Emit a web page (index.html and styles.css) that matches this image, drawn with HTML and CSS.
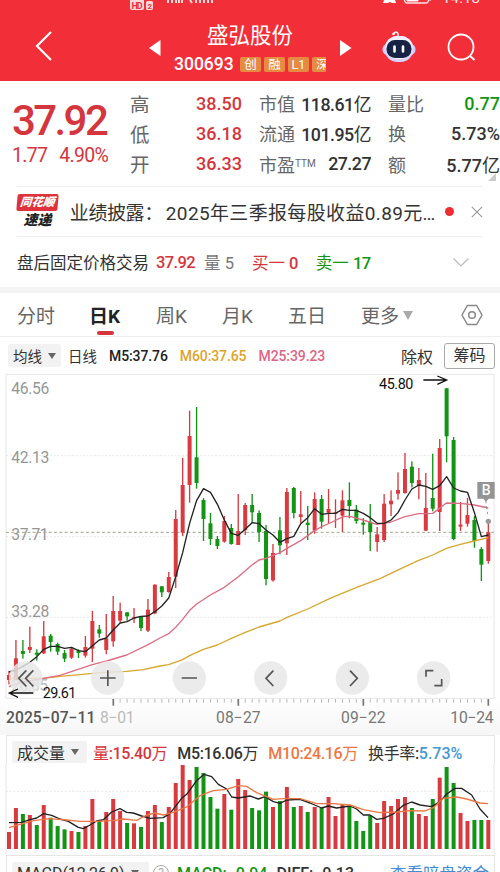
FILE: index.html
```
<!DOCTYPE html>
<html lang="zh-CN">
<head>
<meta charset="utf-8">
<meta name="viewport" content="width=device-width">
<title>盛弘股份 300693</title>
<link rel="stylesheet" href="styles.css">
</head>
<body>
<main class="app">
  <header class="top">
    <svg class="status" viewBox="0 0 500 12" aria-hidden="true">
      <rect x="130" y="-3" width="14" height="13" rx="2" fill="#ffd9d9"/>
      <rect x="146" y="1" width="7" height="9" rx="1.500" fill="#ffd9d9"/>
      <text x="131.500" y="8.500" font-size="9" font-weight="700" fill="#e5323b" textLength="11">HD</text>
      <text x="147.500" y="8.500" font-size="8" font-weight="700" fill="#e5323b">2</text>
      <path d="M168 0v3m4-3v3m4-3v3m3-3v3m3-3v3M190 0l2 3m4-3v3m4-3v3m4-3v3m4-3v3m4-3v3" stroke="#ffd9d9" stroke-width="2" fill="none"/>
      <path d="M384 0h11l1 3h-4l-2-1-2 1h-5z" fill="#fff"/>
      <rect x="404.500" y="-7" width="24" height="10" rx="3" fill="none" stroke="#ffe5e5" stroke-width="1.300"/>
      <path d="M407 0h11v1h-11zM430-2v3" fill="#fff" stroke="#fff" stroke-width="1"/>
      <text x="442" y="3" font-size="15" fill="#ffe5e5" textLength="38">14:18</text>
    </svg>
    <div class="nav">
      <svg class="back" viewBox="0 0 20 32"><path d="M17 2 3 16l14 14" fill="none" stroke="#fff" stroke-width="2.200"/></svg>
      <svg class="tri prev" viewBox="0 0 12 16"><path d="M11.500 0v16L0 8z" fill="#fff"/></svg>
      <div class="stock">
        <h1>盛弘股份</h1>
        <div class="code"><span class="num">300693</span><i>创</i><i>融</i><i class="num">L1</i><i class="cut">深</i></div>
      </div>
      <svg class="tri next" viewBox="0 0 12 16"><path d="M0 0v16l11.500-8z" fill="#fff"/></svg>
      <svg class="robot" viewBox="0 0 34 32">
        <path d="M11 3q4-4 5 0v3" fill="none" stroke="#fff" stroke-width="1.500"/><circle cx="11.500" cy="3" r="1.200" fill="#fff"/>
        <rect x="0.500" y="13" width="33" height="11" rx="5" fill="#cfc9ff"/>
        <rect x="2.500" y="5" width="29" height="26" rx="13" fill="#d9d2fb"/>
        <rect x="3.500" y="5" width="27" height="23" rx="12" fill="#f3f1ff"/>
        <rect x="4.500" y="9" width="25" height="18" rx="8.500" fill="#172344"/>
        <path d="M12.500 15.500v5m8.500-5v5" stroke="#fff" stroke-width="2.600" stroke-linecap="round"/>
      </svg>
      <svg class="search" viewBox="0 0 30 30"><circle cx="14" cy="14" r="12.500" fill="none" stroke="#fff" stroke-width="1.800"/><path d="m23 23 4.500 4" stroke="#fff" stroke-width="2"/></svg>
    </div>
  </header>

  <section class="quote">
    <div class="price"><b>37.92</b><p><span>1.77</span><span>4.90%</span></p></div>
    <dl class="c1"><div><dt>高</dt><dd>38.50</dd></div><div><dt>低</dt><dd>36.18</dd></div><div><dt>开</dt><dd>36.33</dd></div></dl>
    <dl class="c2"><div><dt>市值</dt><dd>118.61<u>亿</u></dd></div><div><dt>流通</dt><dd>101.95<u>亿</u></dd></div><div><dt>市盈<sup>TTM</sup></dt><dd>27.27</dd></div></dl>
    <dl class="c3"><div><dt>量比</dt><dd class="green">0.77</dd></div><div><dt>换</dt><dd>5.73%</dd></div><div><dt>额</dt><dd>5.77<u>亿</u></dd></div></dl>
    <span class="corner"></span>
  </section>

  <section class="news">
    <div class="brand"><b>同花顺</b><strong>速递</strong></div>
    <p>业绩披露：<span>2025年三季报每股收益0.89元…</span></p>
    <span class="dot"></span>
    <svg class="close" viewBox="0 0 12 12"><path d="m.8.800 10.400 10.400m0-10.400L.8 11.200" stroke="#999" stroke-width="1.100"/></svg>
  </section>

  <section class="after">
    <span class="a-title">盘后固定价格交易</span><b class="red">37.92</b>
    <span class="gray a-vol">量 5</span><span class="red a-buy">买一 <b>0</b></span><span class="green a-sell">卖一 <b>17</b></span>
    <svg class="chev" viewBox="0 0 16 9"><path d="m.500.500 7.500 7.500 7.500-7.500" fill="none" stroke="#bbb" stroke-width="1.200"/></svg>
  </section>

  <nav class="tabs">
    <span>分时</span><span class="on">日K</span><span>周K</span><span>月K</span><span>五日</span><span class="more">更多<i></i></span>
    <svg viewBox="0 0 22 22"><path d="M6.300 1.500h9.400L21 11l-5.300 9.500H6.300L1 11z" fill="none" stroke="#888" stroke-width="1.500" stroke-linejoin="round"/><circle cx="11" cy="11" r="3.300" fill="none" stroke="#888" stroke-width="1.500"/></svg>
  </nav>

  <section class="ma">
    <span class="pill">均线<i></i></span><span>日线</span><b>M5:37.76</b><b class="gold">M60:37.65</b><b class="pink">M25:39.23</b><span class="ex">除权</span><span class="chip">筹码</span>
  </section>

  <svg class="kline" viewBox="0 0 1500 1080">
    <defs><linearGradient id="axis" x2="0" y2="1"><stop offset="0" stop-color="#fff"/><stop offset="1" stop-color="#f7f7f7"/></linearGradient></defs>
    <rect y="985" width="1500" height="95" fill="url(#axis)"/>
    <path d="M18 985V13H1482V985Z" class="frame"/>
    <path d="M18 257H1482M18 500H1482M18 742H1482" class="grid"/>
    <g class="ylabels">
      <text x="34" y="72" textLength="114">46.56</text><text x="34" y="280" textLength="114">42.13</text>
      <text x="34" y="510" textLength="112">37.71</text><text x="34" y="742" textLength="114">33.28</text><text x="34" y="962" textLength="110" fill="#bbb">28.85</text>
    </g>
    <path d="M18 487H1482" class="now"/>
    <g id="candles"></g>
    <path class="line gold" d="M27 925L130 925 180 919 240 914 300 908 380 904 430 899 480 888 506 884 548 869 569 857 610 838 652 825 694 805 736 787 777 771 840 753 861 742 923 717 990 685 1070 652 1140 626 1190 602 1256 571 1298 555 1339 535 1381 523 1423 513 1465 503"/>
    <path class="line pink" d="M27 950L60 938 130 925 180 916 277 884 320 873 380 855 440 826 480 804 506 791 527 772 548 748 569 721 590 702 631 675 673 652 715 620 756 585 777 570 798 565 840 548 861 535 902 512 944 482 965 470 990 459 1030 440 1050 439 1089 450 1131 463 1173 456 1215 440 1256 431 1298 430 1319 415 1339 399 1381 400 1423 405 1465 414"/>
    <path id="ma5" class="line black"/>
    <g class="marker"><path d="M1457 390L1463 432" stroke="#999" stroke-width="3" stroke-dasharray="10 8"/><circle cx="1465" cy="454" r="8" fill="#999"/><path d="M1432 336h52v50h-18l-8 9-8-9h-18z" fill="#949494"/><text x="1445" y="376" fill="#fff" font-size="42" font-weight="500">B</text></g>
    <g class="buttons">
      <circle cx="77" cy="924" r="50"/><circle cx="323" cy="924" r="50"/><circle cx="568" cy="924" r="50"/><circle cx="812" cy="924" r="50"/><circle cx="1057" cy="924" r="50"/><circle cx="1301" cy="924" r="50"/>
      <path d="M79 901l-23 24 23 24m21-48-23 24 23 24M300 924h47m-23.500-23v47M545 924h46M820 902l-22 23 22 23M1050 902l22 23-22 23M1278 920v-18h22M1303 947h22v-20"/>
    </g>
    <g class="callout"><text x="1137" y="56" textLength="103">45.80</text><path d="M1270 30h70m-28-12 28 12-28 13M100 969H28m26-12-26 12 26 13"/><text x="128" y="984" textLength="101">29.61</text></g>
    <path id="ticks" stroke="#aaa" stroke-width="2.500"/>
    <path d="M340 987v20M715 987v20M1090 987v20M1465 987v20" stroke="#777" stroke-width="5"/>
    <g class="dates"><text x="300" y="1060" textLength="104" fill="#bbb">8−01</text><text x="18" y="1060" textLength="268" class="first">2025−07−11</text><text x="648" y="1060" textLength="134">08−27</text><text x="1023" y="1060" textLength="134">09−22</text><text x="1351" y="1060" textLength="130">10−24</text></g>
  </svg>

  <section class="volume">
    <div class="vhead"><span class="pill">成交量<i></i></span><b class="red"><u>量</u>:15.40<u>万</u></b><b>M5:16.06<u>万</u></b><b class="orange">M10:24.16<u>万</u></b><b><u>换手率</u>:<em>5.73%</em></b></div>
    <svg viewBox="0 117 1500 270">
      <path d="M18 199H1482" class="grid"/>
      <path d="M18 117V387M1482 117V387" class="frame"/>
      <g id="bars"></g>
      <path class="line black" d="M27 293L65 292 90 284 110 279 131 266 155 271 180 282 205 289 235 307 250 311 270 300 290 288 310 284 335 261 360 251 380 262 400 264 425 273 450 280 490 278 510 265 545 220 560 208 590 167 612 148 635 155 655 178 680 192 695 216 715 219 750 213 775 222 795 215 820 230 840 235 860 225 900 223 930 234 965 249 985 243 1010 249 1050 243 1070 252 1090 270 1110 270 1130 283 1150 280 1180 267 1210 241 1235 231 1260 240 1295 245 1320 230 1340 207 1365 190 1385 190 1415 210 1440 252 1464 278"/>
      <path class="line orange" d="M27 308L60 298 100 287 150 281 200 285 240 289 290 289 340 287 370 282 410 286 440 270 465 264 490 270 520 262 560 246 600 212 640 197 680 193 715 182 740 184 770 203 820 223 850 221 900 221 950 236 1000 236 1050 240 1090 254 1140 263 1190 261 1230 257 1275 258 1300 248 1330 220 1370 216 1400 222 1440 234 1464 236"/>
    </svg>
  </section>
  <section class="macd"><span class="pill">MACD(12,26,9)<i></i></span><span class="help">?</span><b class="green">MACD:−0.94</b><b>DIFF:−0.13</b><span class="link">查看暗盘资金</span></section>
</main>
<script src="chart.js"></script>
</body>
</html>
```
FILE: styles.css
```
* { box-sizing: border-box; margin: 0; padding: 0; }
body { width: 500px; height: 872px; overflow: hidden; background: #fff; color: #333; font-family: Roboto, "Noto Sans CJK SC", sans-serif; }
.app { width: 500px; height: 872px; overflow: hidden; display: flex; flex-direction: column; }
.app > * { flex: none; }
b { font-weight: 500; }
u { text-decoration: none; font-weight: 400; }
i, em { font-style: normal; }
svg { display: block; }
.red { color: #d5363d; }
.green { color: #119614; }
.gray { color: #777; }
.gold { color: #dfa32c; }
.pink { color: #dd6685; }
.orange { color: #ed7641; }

.top { height: 81px; background: #f22f38; color: #fff; }
.status { width: 500px; height: 12px; }
.nav { height: 69px; display: flex; align-items: flex-start; }
.back { width: 20px; height: 32px; margin: 18px 0 0 34px; }
.tri { width: 12px; height: 16px; }
.prev { margin: 28px 0 0 95px; }
.stock { width: 153px; margin-left: 13px; }
.stock h1 { font-size: 21.500px; line-height: 30px; font-weight: 400; margin: 9px 0 0 33px; white-space: nowrap; }
.code { display: flex; align-items: center; height: 20px; margin-top: 3px; gap: 3px; font-size: 17.500px; overflow: hidden; }
.code span { width: 63px; font-weight: 500; }
.code i { flex: none; width: 21px; height: 15px; line-height: 15px; background: #e58b42; border-radius: 2px; font-size: 12.500px; text-align: center; }
.code i.cut { width: 14px; overflow: hidden; text-align: left; padding-left: 4px; border-radius: 2px 0 0 2px; }
.next { margin: 28px 0 0 13px; }
.robot { width: 34px; height: 32px; margin: 19px 0 0 30px; }
.search { width: 30px; height: 30px; margin: 21px 0 0 31px; }

.quote { position: relative; height: 105px; display: flex; padding-top: 7px; }
.price { width: 130px; padding: 8px 0 0 12px; color: #d5363d; }
.price b { display: block; font-size: 42px; line-height: 50px; letter-spacing: -2.600px; }
.price p { display: flex; gap: 12px; font-size: 19.500px; line-height: 19px; letter-spacing: -.7px; }
.quote dl > div { display: flex; justify-content: space-between; align-items: center; height: 30.300px; white-space: nowrap; }
.quote dt { font-size: 18px; color: #666; }
.quote dd { font-size: 18px; font-weight: 500; }
.c1 { width: 112px; }
.quote .c1 dt { font-size: 19.500px; }
.c1 dd { color: #d5363d; }
.c2 { width: 112px; margin-left: 17px; }
.c2 sup { font-size: 10px; vertical-align: 5px; line-height: 0; }
.quote .c2 dd { letter-spacing: -.5px; font-size: 17.800px; }
.c3 { width: 112px; margin-left: 17px; }
.quote dd.green { color: #119614; }
.corner { position: absolute; right: 4px; bottom: 5px; border-left: 8px solid transparent; border-bottom: 8px solid #ccc; }

.news { height: 51px; margin: 0 17px; border-top: 1px solid #eee; border-bottom: 1px solid #eee; display: flex; align-items: center; }
.brand { width: 41px; height: 35px; text-align: center; color: #222; font-style: italic; }
.brand b { display: block; height: 17px; line-height: 16px; background: #de323c; color: #fff; font-size: 11.500px; font-weight: 900; border-radius: 2px; transform: skewX(-5deg); }
.brand strong { display: block; font-size: 14px; line-height: 18px; font-weight: 900; }
.news p { display: flex; width: 374px; margin-left: 12px; font-size: 19px; white-space: nowrap; letter-spacing: -.4px; }
.news p span { margin-left: 3px; letter-spacing: .35px; }
.dot { width: 9px; height: 9px; border-radius: 50%; background: #ee2d35; margin-left: 3px; }
.close { width: 12px; height: 12px; margin-left: 17px; }

.after { height: 50px; padding: 0 31px 0 17px; display: flex; align-items: center; font-size: 16.500px; white-space: nowrap; }
.a-title { width: 139px; }
.after b { letter-spacing: -.6px; }
.a-vol { margin-left: 9px; }
.a-buy { margin-left: 18px; }
.a-sell { margin-left: 18px; }
.chev { width: 16px; height: 9px; margin-left: auto; }

.tabs { height: 50px; border-top: 6px solid #f4f4f4; border-bottom: 1px solid #eee; padding-left: 17px; display: grid; grid-template-columns: 72px 67px 66px 66px 73px 100px 24px; align-items: center; font-size: 19px; color: #666; }
.tabs .on { position: relative; color: #222; font-weight: 700; }
.tabs .on::after { content: ""; position: absolute; left: 8px; bottom: -7px; width: 17px; height: 4px; border-radius: 2px; background: #d5363d; }
.tabs svg { width: 22px; height: 22px; }
.more i { display: inline-block; border: 5px solid transparent; border-top: 9px solid #aaa; border-bottom: 0; margin: 0 0 3px 4px; }

.ma { height: 33px; padding: 4px 5px 0 8px; display: flex; align-items: center; font-size: 14.500px; white-space: nowrap; }
.ma b { color: #222; font-size: 14px; letter-spacing: -.1px; margin-left: 12px; }
.ma b.gold { color: #dfa32c; }
.ma b.pink { color: #dd6685; }
.pill { display: flex; align-items: center; height: 23px; background: #f2f2f2; border-radius: 2px; padding: 0 5px; }
.pill i { border: 4px solid transparent; border-top: 6px solid #666; border-bottom: 0; margin-left: 6px; }
.ma .pill { width: 53px; margin-right: 7px; }
.ex { margin-left: auto; font-size: 16px; }
.chip { width: 51px; height: 26px; line-height: 24px; margin-left: 11px; border: 1px solid #aaa; border-radius: 3px; text-align: center; font-size: 16px; }

.kline { width: 500px; height: 360px; }
svg text { font-family: Roboto, sans-serif; }
.frame { fill: none; stroke: #e6e6e6; stroke-width: 3; }
.grid { stroke: #ddd; stroke-width: 2; stroke-dasharray: 6 5; }
.now { stroke: #a5a58f; stroke-width: 3; stroke-dasharray: 9 7; }
.ylabels { fill: #969696; font-size: 47px; }
.line { fill: none; stroke-width: 4; stroke-linejoin: round; }
.line.black { stroke: #222; }
.line.gold { stroke: #d7a72e; }
.line.pink { stroke: #dc6c84; }
.line.orange { stroke: #ec7745; }
.up { fill: #d83a3f; }
.down { fill: #129414; }
.callout { font-size: 43px; fill: #111; }
.callout path { fill: none; stroke: #111; stroke-width: 4; }
.buttons circle { fill: #e7e7e7; fill-opacity: .84; }
.buttons path { fill: none; stroke: #555; stroke-width: 5; }
.dates { fill: #777; font-size: 47px; }
.dates .first { fill: #555; font-weight: 500; }

.volume { height: 125px; padding-top: 5px; background: linear-gradient(#f7f7f7 5px, #fff 5px); }
.vhead { height: 29px; margin: 0 5px 0 6px; padding: 4px 0 0 5px; border: solid #e6e6e6; border-width: 1px 1px 0; display: flex; align-items: center; font-size: 16px; white-space: nowrap; }
.vhead .pill { width: 75px; height: 22px; margin-right: -2px; }
.vhead b { margin-left: 8px; letter-spacing: -.35px; }
.vhead b + b { margin-left: 10px; }
.vhead em { color: #439ad3; letter-spacing: 0; }
.volume svg { width: 500px; height: 90px; }
.macd { height: 30px; margin: 0 5px 0 6px; padding: 5px 5px 0; border: solid #e6e6e6; border-width: 1px 1px 0; display: flex; align-items: center; font-size: 16px; white-space: nowrap; }
.macd .pill { width: 137px; }
.help { width: 16px; height: 16px; line-height: 14px; border: 1px solid #aaa; border-radius: 50%; color: #aaa; font-size: 12px; text-align: center; margin: 0 8px 0 4px; }
.macd b + b { margin-left: 9px; }
.link { margin-left: auto; color: #438bd3; font-size: 16.500px; }
```
FILE: chart.js
```
// Each session: direction, high, body top, body bottom, low, volume bar top
const sessions = [
  ["r",903,915,930,943,321],["r",810,865,930,930,249],["g",810,843,852,866,267],["r",770,831,840,849,270],["g",838,848,854,872,300],
  ["r",753,799,850,852,240],["g",792,797,816,845,278],["g",818,822,845,855,303],["g",840,849,866,876,313],["r",832,836,863,867,318],
  ["g",838,843,849,864,321],["r",798,831,857,863,303],["r",723,753,836,876,222],["g",765,778,791,803,288],["r",732,805,840,853,261],
  ["r",678,723,814,830,222],["r",698,723,752,758,258],["g",726,727,739,752,294],["r",714,742,745,759,295],["g",738,739,774,783,306],
  ["r",687,719,782,786,258],["r",643,644,730,733,240],["g",648,649,667,681,291],["r",606,621,666,668,246],["r",420,447,620,654,174],
  ["r",264,345,488,498,120],["r",122,198,345,398,165],["g",111,262,339,356,126],["g",384,390,447,513,144],["g",429,460,507,525,216],
  ["g",498,507,528,537,251],["r",438,453,515,518,207],["g",462,474,522,524,254],["r",372,483,525,525,162],["r",399,405,480,495,195],
  ["g",372,405,427,459,249],["g",421,429,486,516,256],["g",465,483,627,646,200],["r",522,549,631,635,246],["g",441,481,526,553,228],
  ["r",354,366,520,555,186],["g",351,354,429,445,246],["r",363,433,441,459,243],["g",408,458,465,510,261],["r",367,387,482,491,246],
  ["g",375,387,455,476,249],["r",357,417,428,460,216],["r",388,427,431,474,273],["r",361,391,437,486,240],["g",337,390,408,445,243],
  ["g",405,419,453,461,288],["g",444,458,464,494,318],["g",402,455,486,543,272],["r",471,493,516,545,294],["r",372,401,510,516,228],
  ["r",361,392,403,438,243],["r",307,360,371,389,222],["r",249,297,369,371,216],["g",274,290,339,352,249],["r",294,330,348,388,267],
  ["r",309,414,482,483,273],["g",251,384,416,424,222],["r",207,234,426,483,158],["g",54,55,199,277,126],["g",201,210,507,511,174],
  ["r",396,464,470,483,264],["r",384,435,461,470,288],["g",438,450,513,533,285],["g",531,537,584,633,285],["r",450,487,573,581,285]
];
const average = [906,900,889,877,860,838,829,829,835,832,842,845,827,810,804,780,759,755,744,739,738,725,708,684,620,548,460,392,356,367,403,450,490,496,478,458,461,480,495,517,506,499,461,443,416,433,430,430,418,421,421,430,443,460,460,450,428,390,357,345,349,358,347,320,354,363,367,428,500,495];
const x = i => 27 + i * 20.84;
const rect = (left, top, w, h, cls) => `<rect x="${left.toFixed(1)}" y="${top}" width="${w}" height="${h}" class="${cls}"/>`;
let candles = "", bars = "", ticks = "";
sessions.forEach(([dir, high, top, bottom, low, vol], i) => {
  const cls = dir === "r" ? "up" : "down";
  candles += rect(x(i) - 2, high, 4, low - high, cls) + rect(x(i) - 6, top, 12, bottom - top, cls);
  bars += rect(x(i) - 6, vol, 12, 372 - vol, cls);
  if (i > 14) ticks += `M${x(i).toFixed(1)} 987v11`;
});
document.getElementById("candles").innerHTML = candles;
document.getElementById("bars").innerHTML = bars;
document.getElementById("ticks").setAttribute("d", ticks);
document.getElementById("ma5").setAttribute("d", "M" + average.map((y, i) => `${x(i).toFixed(1)} ${y}`).join("L"));
```
